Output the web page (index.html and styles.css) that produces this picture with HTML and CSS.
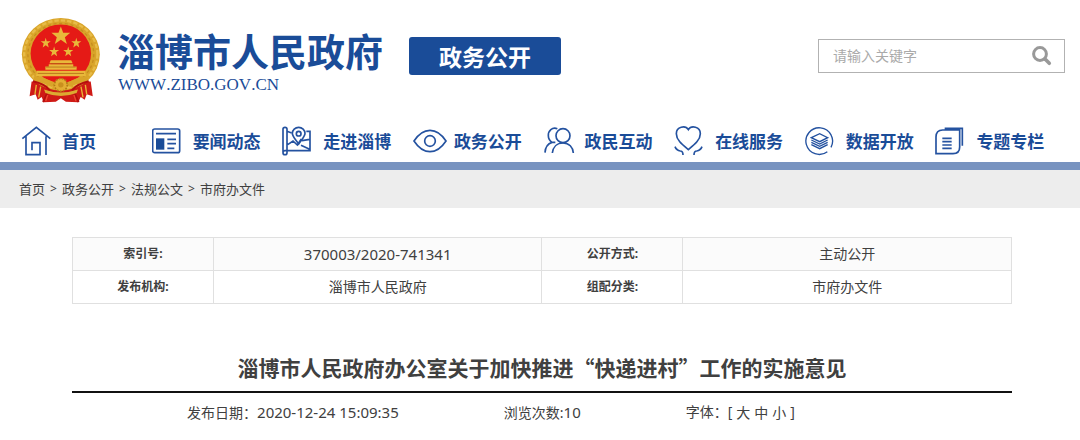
FILE: index.html
```html
<!DOCTYPE html>
<html lang="zh-CN">
<head>
<meta charset="utf-8">
<meta name="viewport" content="width=device-width, initial-scale=1">
<title>淄博市人民政府 - 政务公开</title>
<link rel="stylesheet" href="styles.css">
</head>
<body>
<header class="header">
  <svg class="emblem" viewBox="33 20 237 256" aria-hidden="true">
    <path d="M64 212 L58 256 L76 250 L82 266 L94 258 L100 274 L136 272 L151 262 L166 272 L203 274 L210 258 L222 266 L228 250 L246 256 L240 212Z" fill="#cf1a16"/>
    <ellipse cx="151" cy="131" rx="116" ry="108" fill="#d9a429"/>
    <ellipse cx="151" cy="131" rx="109" ry="101" fill="none" stroke="#e8bc48" stroke-width="7" stroke-dasharray="13 6"/>
    <ellipse cx="151" cy="131" rx="98" ry="92" fill="none" stroke="#c68d20" stroke-width="4" stroke-dasharray="9 8"/>
    <ellipse cx="151" cy="129" rx="90" ry="87" fill="#e51a16"/>
    <g fill="#e9b83a">
      <path d="M151 48l7 19 21 0-16 13 6 20-18-12-18 12 6-20-16-13 21 0z"/>
      <path d="M106 82l3 10 12 0-9 7 3 12-9-7-9 7 3-12-9-7 12 0z"/>
      <path d="M197 82l3 10 12 0-9 7 3 12-9-7-9 7 3-12-9-7 12 0z"/>
      <path d="M131 108l3 10 12 0-9 7 3 12-9-7-9 7 3-12-9-7 12 0z"/>
      <path d="M173 108l3 10 12 0-9 7 3 12-9-7-9 7 3-12-9-7 12 0z"/>
      <path d="M121 149h61l4 9h-69z M115 161h73v6h10v10H105v-10h10z M80 180h143l3 16H77z"/>
    </g>
    <path d="M121 159h62 M107 169h88 M82 188h138" stroke="#a95c10" stroke-width="2"/>
    <path d="M70 204 Q105 208 128 222 M232 204 Q197 208 174 222" stroke="#d9a429" stroke-width="15" fill="none"/>
    <circle cx="151" cy="222" r="19" fill="#e3ae32" stroke="#b47a16" stroke-width="5" stroke-dasharray="5 4"/>
    <circle cx="151" cy="222" r="8" fill="#c98f1e"/>
    <path d="M68 211 Q105 220 116 236 L98 273 M234 211 Q198 220 186 236 L204 273" fill="none" stroke="#b50e0e" stroke-width="6"/>
    <path d="M101 236 Q151 254 202 236 L198 246 Q151 264 105 246Z" fill="#dcaa31"/>
    <path d="M78 222l-4 28 M91 227l-6 32 M224 222l4 28 M211 227l6 32" stroke="#e8b636" stroke-width="4"/>
    <path d="M112 252l-6 18 M190 252l6 18" stroke="#ee4530" stroke-width="4"/>
  </svg>
  <div class="brand">
    <div class="brand-name">淄博市人民政府</div>
    <div class="brand-url">WWW.ZIBO.GOV.CN</div>
  </div>
  <a class="channel" href="#">政务公开</a>
  <form class="search" role="search">
    <input class="search-input" type="text" placeholder="请输入关键字" aria-label="请输入关键字">
    <button class="search-button" type="button" aria-label="搜索">
      <svg class="search-icon" viewBox="0 0 20 20"><circle cx="8" cy="8" r="6.4" fill="none" stroke="#999" stroke-width="3"/><path d="M13 13l4.300 4.300" stroke="#999" stroke-width="3.600" stroke-linecap="round"/></svg>
    </button>
  </form>
</header>
<nav class="nav" aria-label="主导航">
  <a class="nav-item" href="#"><svg class="nav-icon" viewBox="33 20 102 90"><path d="M37 58L79 24l42 34M48 51v55h42V70H66v23M108 51v56"/></svg>首页</a>
  <a class="nav-item" href="#"><svg class="nav-icon" viewBox="425 20 102 90"><rect x="427" y="29" width="81" height="71" rx="6"/><path d="M437 43h60M471 60h26M471 73h26M471 87h21"/><path class="solid" d="M437 57h25v34h-25z"/></svg>要闻动态</a>
  <a class="nav-item" href="#"><svg class="nav-icon" viewBox="36 20 102 90"><path d="M39 98V29q0-5 6-5t6 5v62M62 94H45a6 6 0 1 0 6 6v-7M56 94h64V36h-11M51 36l14 5M53 76l16-11 13 12 12-18M93 78l26 12M96 64l23-4"/><path d="M86 74C77 60 67 52 67 42a19 18 0 0 1 38 0c0 10-10 18-19 32z"/><circle cx="86" cy="43" r="7"/></svg>走进淄博</a>
  <a class="nav-item" href="#"><svg class="nav-icon" viewBox="427 20 102 90"><path d="M430 65Q451 33 478 33T526 65Q505 97 478 97T430 65z"/><circle cx="478" cy="65" r="16"/></svg>政务公开</a>
  <a class="nav-item" href="#"><svg class="nav-icon" viewBox="39 20 102 90"><circle cx="96" cy="49" r="21"/><path d="M64 101c2-18 14-30 32-30s30 12 31 30M79 28C64 22 51 34 52 49c0 9 4 15 11 20-13 4-20 15-21 31M63 69l10 0"/></svg>政民互动</a>
  <a class="nav-item" href="#"><svg class="nav-icon" viewBox="430 20 102 90"><path d="M473 91C455 76 437 62 437 43c0-21 27-26 36-12 9-14 36-9 36 12 0 19-18 33-36 48zM433 82c3 8 9 12 16 13q8 0 8 12M514 82c-3 8-9 12-16 13q-8 0-8 12"/></svg>在线服务</a>
  <a class="nav-item" href="#"><svg class="nav-icon thin" viewBox="43 20 102 90"><path d="M110 97A40 40 0 1 1 121 84M62 55l25-12 24 12-24 12zM62 62l25 12 24-12M62 69l25 12 24-12M62 76l25 12 24-12"/></svg>数据开放</a>
  <a class="nav-item" href="#"><svg class="nav-icon" viewBox="434 20 102 90"><path d="M457 32h51v51q0 20-20 20h-51V53q0-21 20-21zM463 27h53v52M456 57h28M456 67h28M456 77h28M456 87h28"/></svg>专题专栏</a>
</nav>
<nav class="crumbs" aria-label="当前位置">
  <a href="#">首页</a><span class="crumb-sep">&gt;</span><a href="#">政务公开</a><span class="crumb-sep">&gt;</span><a href="#">法规公文</a><span class="crumb-sep">&gt;</span><a href="#">市府办文件</a>
</nav>
<main class="article">
  <table class="info">
    <tr><th scope="row">索引号:</th><td class="digits">370003/2020-741341</td><th scope="row">公开方式:</th><td>主动公开</td></tr>
    <tr><th scope="row">发布机构:</th><td>淄博市人民政府</td><th scope="row">组配分类:</th><td>市府办文件</td></tr>
  </table>
  <h1 class="title">淄博市人民政府办公室关于加快推进“快递进村”工作的实施意见</h1>
  <div class="meta">
    <span>发布日期：<time class="digits">2020-12-24 15:09:35</time></span>
    <span>浏览次数:<span class="digits">10</span></span>
    <span class="sizes">字体：[<button type="button">大</button><button type="button">中</button><button type="button">小</button>]</span>
  </div>
</main>
</body>
</html>
```
FILE: styles.css
```css
* {
  box-sizing: border-box;
}

body {
  margin: 0;
  background: #fff;
  color: #404040;
  font-family: "Noto Sans", "Noto Sans CJK SC", sans-serif;
  font-size: 14px;
  line-height: 20px;
}

a {
  color: inherit;
  text-decoration: none;
}

.header {
  display: flex;
  align-items: flex-start;
  padding: 17px 15px 0 21px;
}

.emblem {
  width: 80px;
  height: 86px;
  margin-right: 16px;
}

.brand {
  padding-top: 11px;
  color: #1a4c98;
}

.brand-name {
  font-family: "Noto Sans CJK SC", sans-serif;
  font-size: 38px;
  font-weight: 700;
  line-height: 44px;
}

.brand-url {
  padding-left: 1px;
  font-family: "Liberation Serif", serif;
  font-size: 17px;
  font-kerning: none;
  line-height: 26px;
}

.channel {
  margin: 20px 0 0 26px;
  padding: 0 30px;
  border-radius: 3px;
  background: #1a4c98;
  color: #fff;
  font-family: "Noto Sans CJK SC", sans-serif;
  font-size: 23px;
  font-weight: 700;
  line-height: 38px;
}

.search {
  display: flex;
  width: 247px;
  height: 34px;
  margin: 22px 0 0 auto;
  border: 1px solid #b2b2b2;
}

.search-input {
  flex: 1;
  min-width: 0;
  padding: 0 0 0 14px;
  border: 0;
  background: none;
  font: inherit;
}

.search-input::placeholder {
  color: #aaa;
}

.search-button {
  display: flex;
  align-items: center;
  padding: 0 12px;
  border: 0;
  background: none;
}

.search-icon {
  width: 20px;
  height: 20px;
}

.nav {
  display: grid;
  grid-template-columns: repeat(8, 1fr);
  padding: 23px 14px 6px 21px;
  border-bottom: 8px solid #7893c0;
}

.nav-item {
  display: flex;
  align-items: center;
  gap: 7px;
  color: #1a4c98;
  font-family: "Noto Sans CJK SC", sans-serif;
  font-size: 17px;
  font-weight: 700;
  line-height: 30px;
  white-space: nowrap;
}

.nav-icon {
  flex: none;
  width: 34px;
  height: 30px;
  fill: none;
  stroke: #2452a0;
  stroke-width: 5;
}

.nav-icon.thin {
  stroke-width: 4;
}

.nav-icon .solid {
  fill: #1a4c98;
  stroke: none;
}

.crumbs {
  display: flex;
  padding: 9px 19px;
  background: #ededed;
  font-size: 13px;
}

.crumb-sep {
  width: 17px;
  text-align: center;
  font-size: 12px;
}

.article {
  padding: 29px 68px 20px 72px;
}

.info {
  width: 100%;
  table-layout: fixed;
  border-collapse: collapse;
  text-align: center;
}

.info th,
.info td {
  height: 33px;
  padding: 0;
  border: 1px solid #e0e0e0;
}

.info th {
  width: 15%;
  font-size: 12px;
}

.info td {
  width: 35%;
}

.info tr:first-child {
  background: #fbfbfb;
}

.info .digits,
.digits {
  font-size: 15px;
}

.title {
  margin: 47px 0 0;
  padding-bottom: 8px;
  border-bottom: 2px solid #111;
  font-family: "Noto Sans CJK SC", sans-serif;
  font-size: 21px;
  font-weight: 700;
  line-height: 32px;
  text-align: center;
}

.meta {
  display: flex;
  justify-content: center;
  gap: 105px;
  padding: 9px 102px 0 0;
}

.sizes {
  display: flex;
}

.sizes button {
  margin: 0 0 0 4px;
  padding: 0;
  border: 0;
  background: none;
  color: inherit;
  font: inherit;
}

.sizes button:last-of-type {
  margin-right: 4px;
}
```
